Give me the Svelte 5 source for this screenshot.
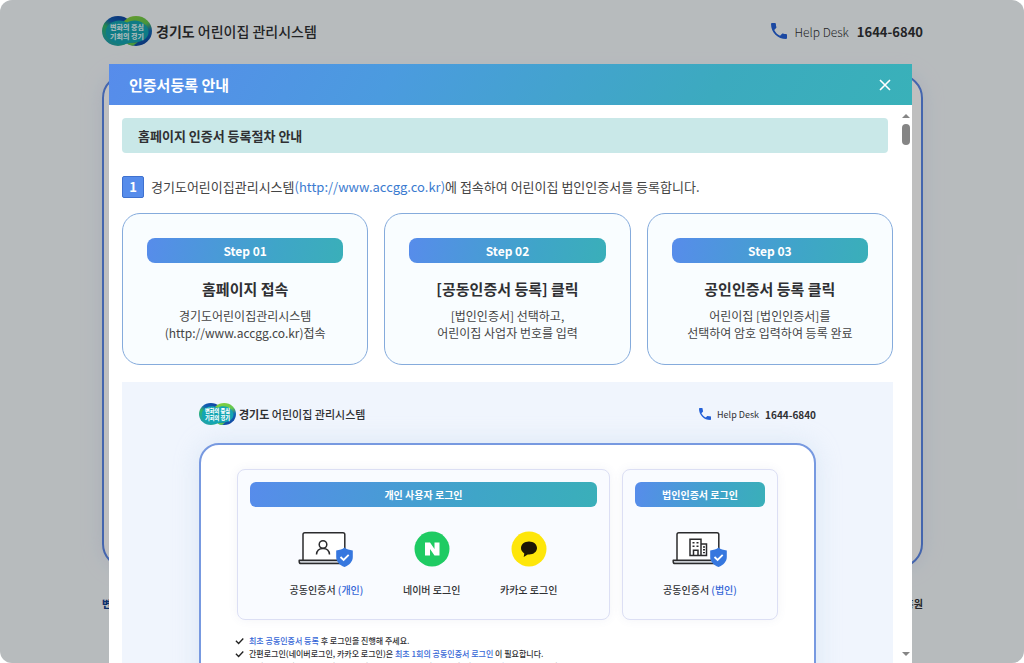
<script>
  const steps = [
    { tag: 'Step 01', title: '홈페이지 접속', lines: ['경기도어린이집관리시스템', '(http://www.accgg.co.kr)접속'] },
    { tag: 'Step 02', title: '[공동인증서 등록] 클릭', lines: ['[법인인증서] 선택하고,', '어린이집 사업자 번호를 입력'] },
    { tag: 'Step 03', title: '공인인증서 등록 클릭', lines: ['어린이집 [법인인증서]를', '선택하여 암호 입력하여 등록 완료'] }
  ];
</script>

{#snippet logo(id)}
  <svg class="mark" viewBox="0 0 50 30" aria-hidden="true">
    <defs>
      <linearGradient id="{id}-l" x1="0.8" y1="0" x2="0.2" y2="0.9">
        <stop offset="0" stop-color="#0f3f9e" />
        <stop offset="0.4" stop-color="#1260b4" />
        <stop offset="0.62" stop-color="#35b866" />
        <stop offset="1" stop-color="#1f9fb0" />
      </linearGradient>
      <linearGradient id="{id}-r" x1="0.3" y1="0" x2="0.8" y2="1">
        <stop offset="0" stop-color="#86cf3c" />
        <stop offset="0.4" stop-color="#62c850" />
        <stop offset="0.65" stop-color="#1268b4" />
        <stop offset="1" stop-color="#0f3f9e" />
      </linearGradient>
    </defs>
    <ellipse cx="16" cy="15" rx="16" ry="15" fill="url(#{id}-l)" />
    <ellipse cx="34" cy="15" rx="16" ry="15" fill="url(#{id}-r)" />
    <path d="M12 5.500C17 3.500 21 4.500 25 6.500C29 4.500 33 3.500 38 5.500C44 8 47 12 46.500 17C46 21 43 24 38 25.500C33 27 29 26.500 25 27.500C20 29.500 14 28.500 9 25C5 22 3 18 4 13C5 9.500 8 7 12 5.500Z" fill="#14a5b2" />
    <path d="M25 27.500C29 26.500 33 27 36 26L31 29.700C28.500 29.500 26.500 29 25 27.500Z" fill="#62c850" />
    <text x="25" y="14" text-anchor="middle">변화의 중심</text>
    <text x="25" y="23" text-anchor="middle">기회의 경기</text>
  </svg>
{/snippet}

{#snippet phone()}
  <svg class="phone" viewBox="3 3 18 18" aria-hidden="true">
    <path fill="#2461d8" d="M6.62 10.79c1.44 2.83 3.76 5.14 6.59 6.59l2.2-2.2c.27-.27.67-.36 1.02-.24 1.12.37 2.33.57 3.57.57.55 0 1 .45 1 1V20c0 .55-.45 1-1 1C10.610 21 3 13.390 3 4c0-.55.45-1 1-1h3.500c.55 0 1 .45 1 1 0 1.250.2 2.450.57 3.570.11.35.03.74-.25 1.020l-2.200 2.200z" />
  </svg>
{/snippet}

{#snippet head(id)}
  <div class="brand">
    {@render logo(id)}
    <span><b>경기도</b> 어린이집 관리시스템</span>
  </div>
  <div class="help">
    {@render phone()}
    <span>Help Desk</span>
    <b>1644-6840</b>
  </div>
{/snippet}

{#snippet laptop(kind)}
  <svg class="laptop" viewBox="0 0 56 36" fill="none" stroke="#2b2b2d" stroke-width="1.5" aria-hidden="true">
    <path d="M5 29V3.500A1.800 1.800 0 0 1 6.800 1.700H45A1.800 1.800 0 0 1 46.800 3.500V29" fill="#fff" />
    <path d="M1.200 29.200H46V32.600H3A1.800 1.800 0 0 1 1.200 30.800Z" fill="#c9ccd2" stroke-linejoin="round" />
    {#if kind === 'person'}
      <circle cx="25" cy="13.500" r="3.800" />
      <path d="M18.500 23.500C18.800 19.500 21 17.500 25 17.500S31.200 19.500 31.500 23.500" />
    {:else}
      <path d="M18 24.500V8.300H29V24.500ZM29 13H34.500V24.500H29M21.500 24.500V19.300H26V24.500" />
      <path d="M20.500 11.800H22.500M24.500 11.800H26.500M20.500 15.300H22.500M24.500 15.300H26.500M31 16H33M31 18.800H33M31 21.600H33" stroke-width="1.400" />
    {/if}
    <path d="M46.500 16.500C48.500 18.200 51.500 19.200 54.800 19.400V26C54.800 30.500 51.500 34 46.500 36 41.500 34 38.200 30.500 38.200 26V19.400C41.500 19.200 44.500 18.200 46.500 16.500Z" fill="#3677df" stroke="none" />
    <path d="M42.500 26L45.600 29 50.700 23.800" stroke="#fff" stroke-width="1.800" />
  </svg>
{/snippet}

{#snippet tick()}
  <svg class="tick" viewBox="0 0 10 8" fill="none" stroke="#222" stroke-width="1.500" aria-hidden="true">
    <path d="M1 3.800L4 6.700L9.200 1.200" />
  </svg>
{/snippet}

<div class="app">
  <div class="page">
    <header class="top">{@render head('top')}</header>
    <main class="panel"></main>
    <footer><b class="slogan">변</b><b>흥원</b></footer>
  </div>

  <div class="overlay">
    <div class="modal" role="dialog" aria-labelledby="dialog-title">
      <div class="bar">
        <h1 id="dialog-title">인증서등록 안내</h1>
        <button aria-label="닫기">
          <svg viewBox="0 0 12 12" stroke="#fff" stroke-width="1.600" aria-hidden="true"><path d="M1 1L11 11M11 1L1 11" /></svg>
        </button>
      </div>

      <div class="body">
        <div class="content">
          <h2>홈페이지 인증서 등록절차 안내</h2>
          <p class="lead">
            <b class="num">1</b>
            <span>경기도어린이집관리시스템<a href="http://www.accgg.co.kr">(http://www.accgg.co.kr)</a>에 접속하여 어린이집 법인인증서를 등록합니다.</span>
          </p>

          <div class="steps">
            {#each steps as s}
              <section class="step">
                <div class="tag">{s.tag}</div>
                <h3>{s.title}</h3>
                <p>{s.lines[0]}<br />{s.lines[1]}</p>
              </section>
            {/each}
          </div>

          <div class="preview">
            <div class="top mini">{@render head('mini')}</div>
            <div class="card">
              <div class="groups">
                <section class="group">
                  <h4>개인 사용자 로그인</h4>
                  <div class="methods">
                    <a href="#person">{@render laptop('person')}<span>공동인증서 <em>(개인)</em></span></a>
                    <a href="#naver">
                      <svg class="round" viewBox="0 0 36 36" aria-hidden="true">
                        <circle cx="18" cy="18" r="17.500" fill="#1fcb63" />
                        <path fill="#fff" d="M11 11.500H16L20.500 18V11.500H25.500V24.500H20.500L16 18V24.500H11Z" />
                      </svg>
                      <span>네이버 로그인</span>
                    </a>
                    <a href="#kakao">
                      <svg class="round" viewBox="0 0 36 36" aria-hidden="true">
                        <circle cx="18" cy="18" r="17.500" fill="#fee60a" />
                        <path fill="#1d1605" d="M18 10.500C13.500 10.500 10 13.300 10 17C10 19.300 11.300 21.200 13.300 22.400L12.700 26L16.700 23.400C22 24 26 21 26 17C26 13.300 22.500 10.500 18 10.500Z" />
                      </svg>
                      <span>카카오 로그인</span>
                    </a>
                  </div>
                </section>
                <section class="group">
                  <h4>법인인증서 로그인</h4>
                  <div class="methods">
                    <a href="#corp">{@render laptop('building')}<span>공동인증서 <em>(법인)</em></span></a>
                  </div>
                </section>
              </div>
              <ul>
                <li>{@render tick()}<span><em>최초 공동인증서 등록</em> 후 로그인을 진행해 주세요.</span></li>
                <li>{@render tick()}<span>간편로그인(네이버로그인, 카카오 로그인)은 <em>최초 1회의 공동인증서 로그인</em> 이 필요합니다.</span></li>
                <li class="plain"><span>법인 사용자의 최초 로그인 시 공동인증서 등록에 대한 안내사항 확인 후 <em>공동인증서를 등록</em>하여 주세요.</span></li>
              </ul>
            </div>
          </div>
        </div>

        <div class="rail" aria-hidden="true">
          <i class="up"></i>
          <i class="thumb"></i>
          <i class="down"></i>
        </div>
      </div>
    </div>
  </div>
</div>

<style>
  :global(body) { margin: 0; background: #fff; overflow: hidden; }
  .app {
    position: relative;
    height: 100vh;
    overflow: hidden;
    border-radius: 12px;
    background: #f5fafd;
    color: #2f3033;
    font-family: "Noto Sans CJK KR", "Noto Sans", sans-serif;
  }
  .app :is(h1, h2, h3, h4, p, ul) { margin: 0; padding: 0; }
  a { color: inherit; text-decoration: none; }
  em { font-style: normal; color: #3465d6; }

  .page { padding: 0 101px 0 102px; }
  .top {
    display: flex;
    align-items: center;
    justify-content: space-between;
    height: 62px;
    font-size: 14px;
  }
  .brand, .help { display: flex; align-items: center; }
  .brand { gap: 4px; }
  .brand span { font-weight: 500; }
  .mark { width: 50px; height: 30px; }
  .mark text { font-size: 7px; font-weight: 900; fill: #fff; }
  .page .mark text { fill: #d8f3f4; }
  .help { gap: 8px; }
  .help span { font-size: 12px; font-weight: 300; }
  .help b { font-size: 13px; }
  .phone { width: 16px; height: 16px; }

  .panel {
    box-sizing: border-box;
    height: 494px;
    margin-top: 12px;
    border: 2px solid #5b87e8;
    border-radius: 24px;
    background: #fff;
    box-shadow: 0 0 20px #c8d2ee66;
  }
  footer {
    display: flex;
    justify-content: space-between;
    margin-top: 28px;
    font-size: 10px;
  }
  .slogan { color: #123f91; font-weight: 900; }

  .overlay {
    position: absolute;
    inset: 0;
    display: flex;
    padding: 64px 112px 0 109px;
    background: rgb(0 0 0 / 0.25);
  }
  .modal {
    flex: 1;
    min-width: 0;
    display: flex;
    flex-direction: column;
    background: #fff;
  }
  .bar {
    flex: none;
    display: flex;
    align-items: center;
    justify-content: space-between;
    height: 41px;
    padding: 0 20px;
    background: linear-gradient(120deg, #578ceb, #4b9bdf 35%, #3caabf 75%, #39b1b9);
    color: #fff;
  }
  h1 { font-size: 15px; font-weight: 700; line-height: 20px; }
  .bar button {
    display: grid;
    place-items: center;
    width: 14px;
    height: 14px;
    padding: 0;
    border: 0;
    background: none;
  }
  .bar button svg { width: 12px; height: 12px; }

  .body { flex: 1; min-height: 0; display: flex; }
  .content {
    flex: 1;
    min-width: 0;
    overflow: hidden;
    padding: 13px 6px 0 13px;
  }
  h2 {
    margin-right: 5px !important;
    padding-left: 16px !important;
    border-radius: 4px;
    background: #c9e8e8;
    font-size: 13px;
    line-height: 35px;
  }
  .lead {
    display: flex;
    align-items: center;
    gap: 7px;
    margin-top: 23px !important;
    font-size: 13px;
    line-height: 22px;
    color: #444;
  }
  .lead a { color: #3b7bd0; }
  .num {
    box-sizing: border-box;
    width: 22px;
    height: 22px;
    border: 1px solid #3f71cf;
    border-radius: 2px;
    background: #568ceb;
    color: #fff;
    line-height: 20px;
    text-align: center;
  }

  .steps {
    display: grid;
    grid-template-columns: repeat(3, 1fr);
    gap: 16px;
    margin-top: 15px;
  }
  .step {
    padding: 24px 24px 23px;
    border: 1px solid #85abdc;
    border-radius: 18px;
    background: #f9fdff;
    text-align: center;
  }
  .tag, h4 {
    border-radius: 8px;
    background: linear-gradient(100deg, #578ceb, #3fa5c8 65%, #3aafb9);
    color: #fff;
    line-height: 25px;
  }
  .tag { font-size: 12px; font-weight: 700; }
  h3 { margin-top: 15px !important; font-size: 15px; line-height: 22px; }
  .step p { margin-top: 7px !important; font-size: 12px; line-height: 17px; color: #444; }

  .preview {
    margin-top: 17px;
    padding: 0 77px;
    background: #f0f5fd;
  }
  .mini { height: 58px; padding-top: 3px; font-size: 11px; }
  .mini .mark { width: 37px; height: 24px; }
  .mini .brand { gap: 3px; }
  .mini .phone { width: 12px; height: 12px; }
  .mini .help { gap: 6px; }
  .mini .help span { font-size: 9px; font-weight: 400; }
  .mini .help b { font-size: 10px; }
  .card {
    padding: 24px 36px 40px;
    border: 2px solid #7799e0;
    border-radius: 20px;
    background: #fff;
    box-shadow: 0 0 24px #b9d3ea66;
  }
  .groups { display: grid; grid-template-columns: 373fr 156fr; gap: 12px; }
  .group {
    min-width: 0;
    box-sizing: border-box;
    height: 151px;
    padding: 12px;
    border: 1px solid #dcdff4;
    border-radius: 8px;
    background: #f9fbff;
    box-shadow: 0 0 10px #5b6aa014;
  }
  h4 { border-radius: 6px; font-size: 10px; text-align: center; }
  .methods {
    display: flex;
    justify-content: space-evenly;
    margin-top: 24px;
    font-size: 10px;
    line-height: 16px;
  }
  .methods a { display: flex; flex-direction: column; align-items: center; gap: 15px; }
  .methods span { font-weight: 500; }
  .laptop { width: 56px; height: 36px; }
  .round { width: 36px; height: 36px; }

  ul { margin-top: 14px !important; list-style: none; font-size: 8px; font-weight: 500; line-height: 13px; }
  li { display: flex; align-items: center; gap: 5px; margin-left: -2px; white-space: nowrap; }
  .plain { padding-left: 14px; }
  .tick { width: 9px; height: 8px; }

  .rail {
    flex: none;
    display: flex;
    flex-direction: column;
    align-items: center;
    width: 13px;
    padding: 9px 0 7px;
  }
  .up, .down { border: 4px solid transparent; }
  .up { border-top-width: 0; border-bottom-color: #858585; }
  .down { margin-top: auto; border-bottom-width: 0; border-top-color: #858585; }
  .thumb { width: 8px; height: 21px; margin-top: 6px; border-radius: 4px; background: #858585; }
</style>
